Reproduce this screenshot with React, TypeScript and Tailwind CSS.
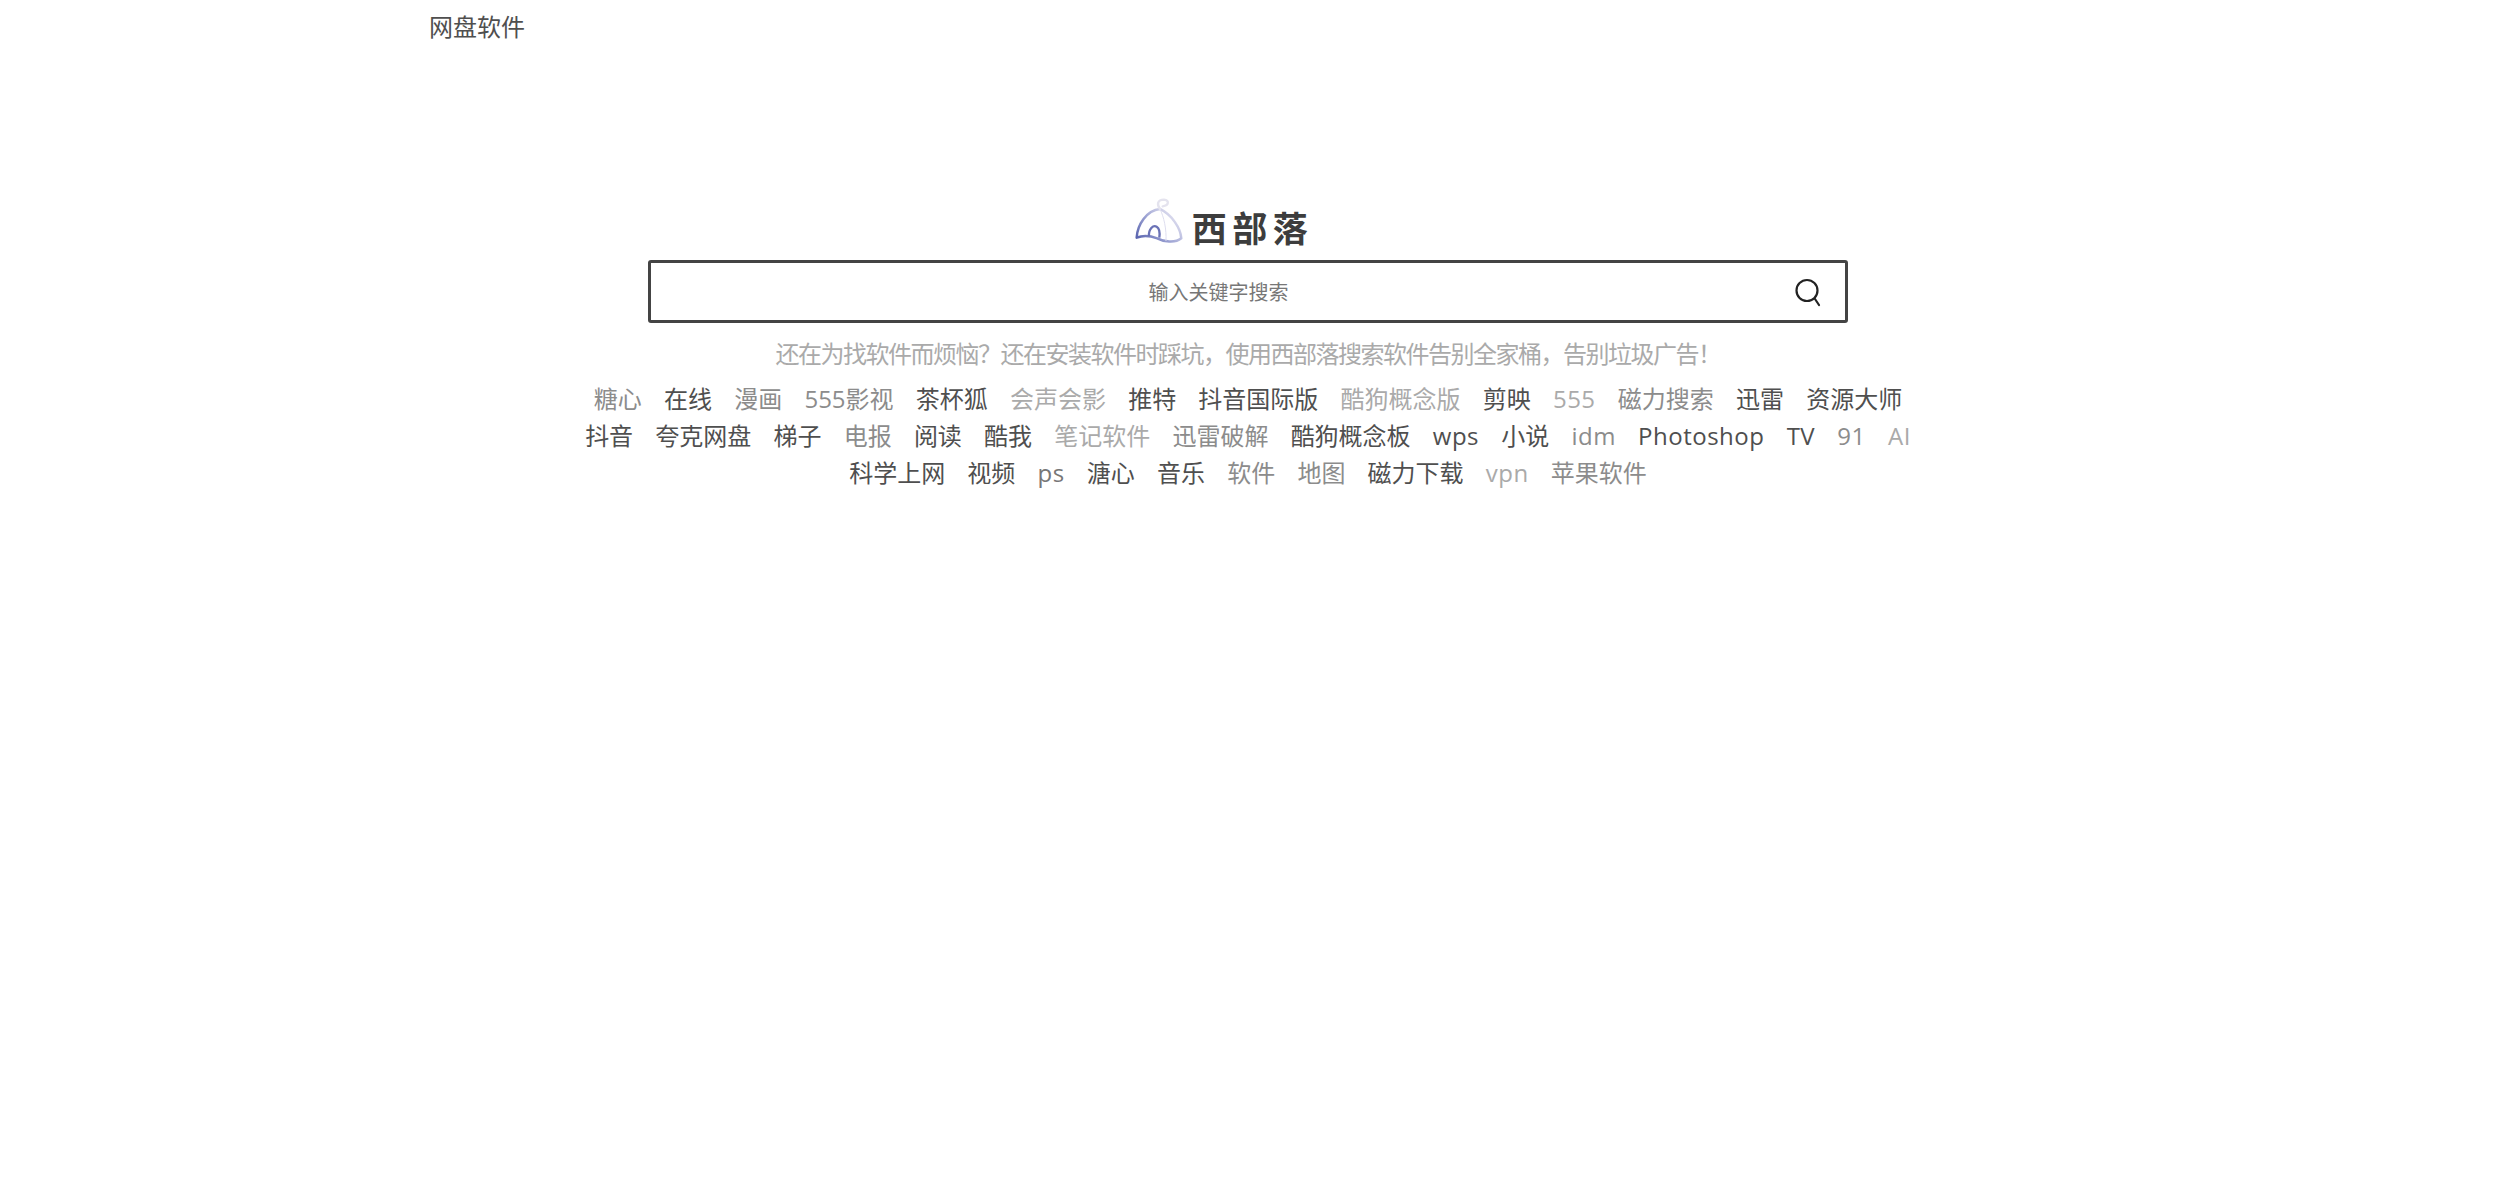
const font = { fontFamily: '"Open Sans","Noto Sans CJK SC",sans-serif' };
const D = "text-[#4f4f4f]", M = "text-[#8c8c8c]", L = "text-[#aaa]";
const rows: [string, string][][] = [
  [["糖心", M], ["在线", D], ["漫画", M], ["555影视", M], ["茶杯狐", D], ["会声会影", L], ["推特", D], ["抖音国际版", D], ["酷狗概念版", L], ["剪映", D], ["555", L], ["磁力搜索", M], ["迅雷", D], ["资源大师", D]],
  [["抖音", D], ["夸克网盘", D], ["梯子", D], ["电报", M], ["阅读", D], ["酷我", D], ["笔记软件", L], ["迅雷破解", M], ["酷狗概念板", D], ["wps", D], ["小说", D], ["idm", M], ["Photoshop", D], ["TV", D], ["91", M], ["AI", L]],
  [["科学上网", D], ["视频", D], ["ps", "text-[#777]"], ["溏心", D], ["音乐", D], ["软件", M], ["地图", M], ["磁力下载", D], ["vpn", L], ["苹果软件", M]],
];
const latin = /^[A-Za-z0-9]+$/;
function Logo() {
  return (
    <svg className="mt-[3px]" width="48.3" height="48.3" viewBox="105 55 145 145" fill="none">
      <defs>
        <linearGradient id="g" gradientUnits="userSpaceOnUse" x1="115" y1="185" x2="215" y2="90">
          <stop offset="0" stopColor="#5560ad" />
          <stop offset="0.5" stopColor="#9ea4d4" />
          <stop offset="1" stopColor="#e6e5f2" />
        </linearGradient>
      </defs>
      <path d="M180 88C140 92 112 135 110 174C125 168 150 168 172 176C190 186 225 192 244 176C242 145 215 105 180 88Z" stroke="url(#g)" strokeWidth="7.5" strokeLinejoin="round" />
      <path d="M180 88C192 112 200 150 198 184" stroke="#dedeef" strokeWidth="3" />
      <path d="M147 170C145 148 160 135 170 141C178 146 180 160 178 174" stroke="#6a72b6" strokeWidth="7" />
      <path d="M180 88C170 75 172 60 192 60C208 62 208 78 188 80" stroke="#e4e3ee" strokeWidth="7" strokeLinecap="round" />
    </svg>
  );
}
export default function App() {
  return (
    <div className="min-h-[1201px] bg-white pl-[429px]" style={font}>
      <div className="w-[1638px]">
        <a className="block h-[52px] pt-[1px] text-[24px] leading-[52px] text-[#4f4f4f]">网盘软件</a>
        <div className="mt-[143px] flex h-[65px] items-start justify-center gap-[8.5px] pr-[48px]">
          <Logo />
          <span className="text-[35px] leading-[68px] font-bold tracking-[5.5px] text-[#3d3d3d]">西部落</span>
        </div>
        <div className="mx-auto flex h-[63px] w-[1200px] items-center rounded-[3px] border-[3px] border-[#444] bg-white">
          <div className="flex-1 pr-[7px] pt-[3px] text-center text-[20px] text-[#777]">输入关键字搜索</div>
          <svg className="mr-[22px]" width="30" height="30" viewBox="0 0 30 30" fill="none" stroke="#222" strokeWidth="2.2"><circle cx="14" cy="13.5" r="10.5" /><path d="M22 22l4 6" strokeLinecap="round" /></svg>
        </div>
        <p className="mt-[12.5px] text-center text-[24px] leading-[36px] tracking-[-1.5px] text-[#aaa]">还在为找软件而烦恼？还在安装软件时踩坑，使用西部落搜索软件告别全家桶，告别垃圾广告！</p>
        <div className="mt-[9px]">
          {rows.map((r, i) => (
            <div key={i} className="flex h-[37px] items-center justify-center gap-[22.2px] text-[24px]">
              {r.map(([t, c]) => <a key={t} className={latin.test(t) ? `${c} tracking-[0.5px]` : c}>{t}</a>)}
            </div>
          ))}
        </div>
      </div>
    </div>
  );
}
